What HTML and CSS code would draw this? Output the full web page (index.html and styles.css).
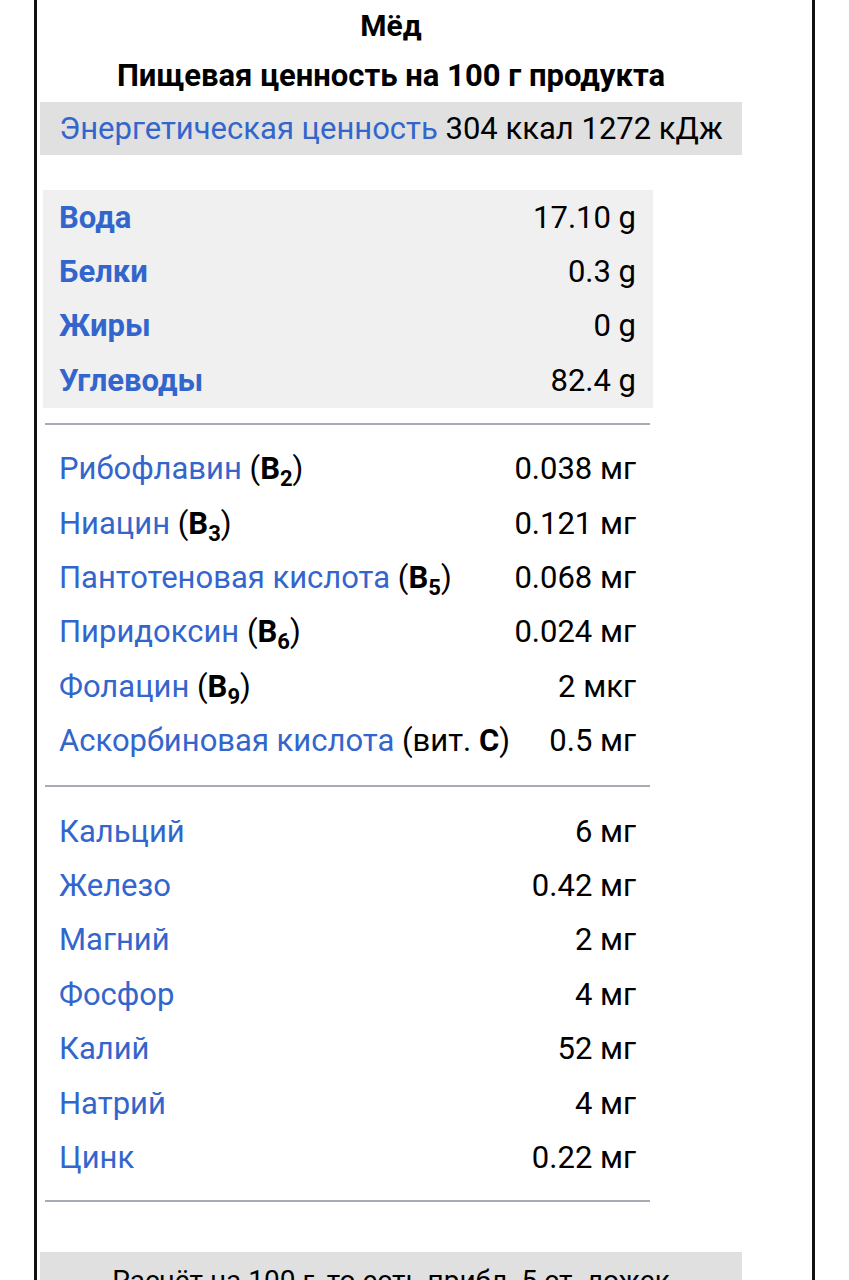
FILE: index.html
```html
<!DOCTYPE html>
<html lang="ru">
<head>
<meta charset="utf-8">
<link rel="stylesheet" href="styles.css">
</head>
<body>
<div class="frame">
  <div class="infobox">
    <div class="title">Мёд</div>
    <div class="subtitle">Пищевая ценность на 100 г продукта</div>
    <div class="energy"><a class="link">Энергетическая ценность</a> 304 ккал 1272 кДж</div>

    <div class="nutrients">
      <div class="macro">
        <div class="row"><span class="link bold">Вода</span><span class="val">17.10 g</span></div>
        <div class="row"><span class="link bold">Белки</span><span class="val">0.3 g</span></div>
        <div class="row"><span class="link bold">Жиры</span><span class="val">0 g</span></div>
        <div class="row"><span class="link bold">Углеводы</span><span class="val">82.4 g</span></div>
      </div>
      <div class="section">
        <div class="row"><span><span class="link">Рибофлавин</span> (<b>B<sub>2</sub></b>)</span><span class="val">0.038 мг</span></div>
        <div class="row"><span><span class="link">Ниацин</span> (<b>B<sub>3</sub></b>)</span><span class="val">0.121 мг</span></div>
        <div class="row"><span><span class="link">Пантотеновая кислота</span> (<b>B<sub>5</sub></b>)</span><span class="val">0.068 мг</span></div>
        <div class="row"><span><span class="link">Пиридоксин</span> (<b>B<sub>6</sub></b>)</span><span class="val">0.024 мг</span></div>
        <div class="row"><span><span class="link">Фолацин</span> (<b>B<sub>9</sub></b>)</span><span class="val">2 мкг</span></div>
        <div class="row"><span><span class="link">Аскорбиновая кислота</span> (вит. <b>C</b>)</span><span class="val">0.5 мг</span></div>
      </div>
      <div class="section minerals">
        <div class="row"><span class="link">Кальций</span><span class="val">6 мг</span></div>
        <div class="row"><span class="link">Железо</span><span class="val">0.42 мг</span></div>
        <div class="row"><span class="link">Магний</span><span class="val">2 мг</span></div>
        <div class="row"><span class="link">Фосфор</span><span class="val">4 мг</span></div>
        <div class="row"><span class="link">Калий</span><span class="val">52 мг</span></div>
        <div class="row"><span class="link">Натрий</span><span class="val">4 мг</span></div>
        <div class="row"><span class="link">Цинк</span><span class="val">0.22 мг</span></div>
      </div>
      <div class="rule"></div>
    </div>

    <div class="note">Расчёт на 100 г, то есть прибл. 5 ст. ложек</div>
  </div>
</div>
</body>
</html>
```

FILE: styles.css
```css
html, body {
  margin: 0;
  padding: 0;
  background: #ffffff;
}

body {
  font-family: Roboto, "Noto Sans", sans-serif;
  font-size: 31px;
  color: #000000;
}

.frame {
  margin-left: 34px;
  width: 775px;
  min-height: 1280px;
  border-left: 3px solid #111111;
  border-right: 3px solid #111111;
}

.infobox {
  margin-left: 3px;
  width: 702px;
  display: flex;
  flex-direction: column;
}

.title,
.subtitle {
  height: 50px;
  display: flex;
  align-items: center;
  justify-content: center;
  font-weight: 700;
}

.title {
  font-size: 30px;
}

.subtitle {
  font-size: 31px;
}

.energy {
  margin-top: 2px;
  height: 53px;
  background: #e0e0e0;
  display: flex;
  align-items: center;
  justify-content: center;
  white-space: pre;
}

.link {
  color: #3366cc;
}

.bold {
  font-weight: 700;
}

.nutrients {
  margin-top: 35px;
  margin-left: 3px;
  width: 610px;
  display: flex;
  flex-direction: column;
}

.macro {
  background: #f0f0f0;
}

.row {
  height: 54.4px;
  padding: 0 17px 0 16px;
  display: flex;
  align-items: center;
  justify-content: space-between;
  white-space: nowrap;
}

.val {
  text-align: right;
}

.section {
  margin-top: 15px;
  padding-top: 17px;
  margin-left: 2px;
  margin-right: 3px;
  border-top: 2px solid #a7abb3;
}

.section.minerals {
  margin-top: 17px;
}

.section .row {
  padding-left: 14px;
  padding-right: 14px;
}

.rule {
  margin-top: 15px;
  margin-left: 2px;
  margin-right: 3px;
  border-top: 2px solid #a7abb3;
}

b {
  font-weight: 700;
}

sub {
  font-size: 22px;
  line-height: 0;
  vertical-align: -7px;
}

.note {
  margin-top: 50px;
  height: 60px;
  background: #e0e0e0;
  display: flex;
  align-items: flex-start;
  justify-content: center;
  padding-top: 12px;
  font-size: 28px;
}
```
